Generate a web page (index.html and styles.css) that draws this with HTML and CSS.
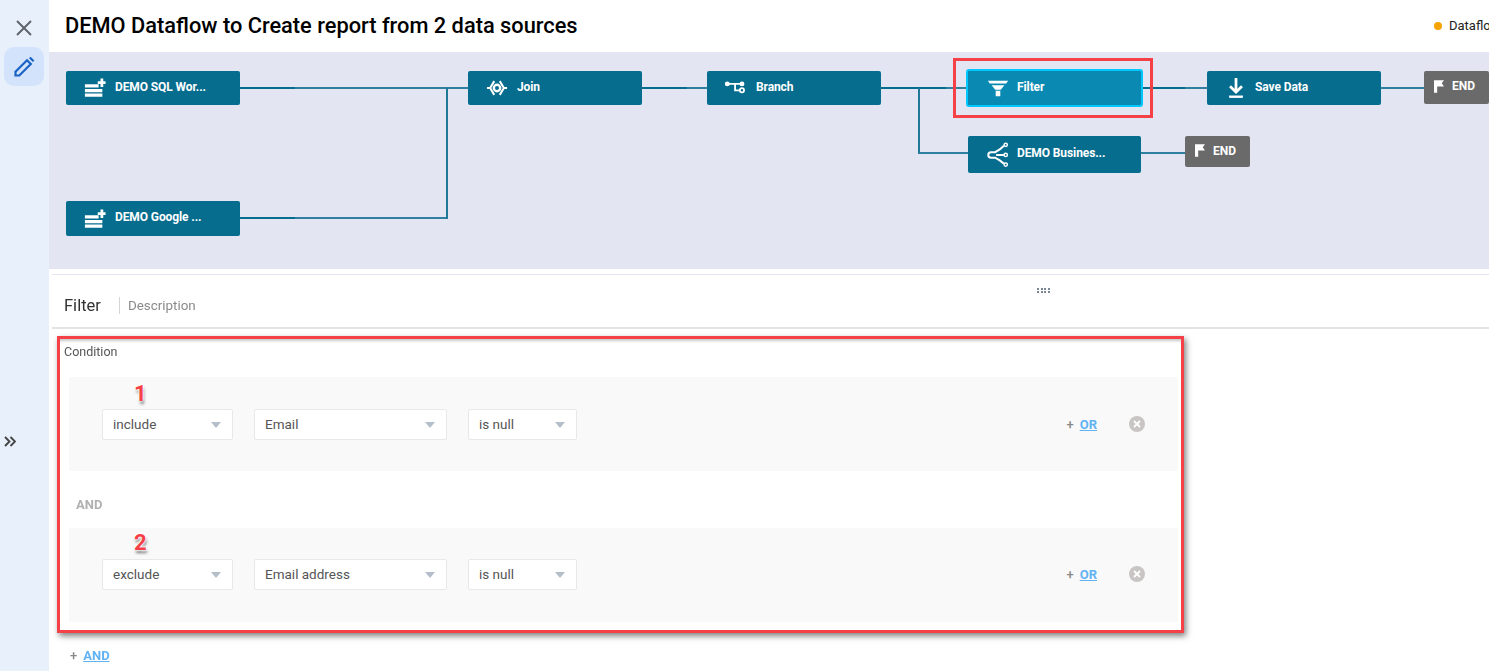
FILE: index.html
```html
<!DOCTYPE html>
<html lang="en">
<head>
<meta charset="utf-8">
<title>DEMO Dataflow</title>
<link rel="stylesheet" href="styles.css">
</head>
<body>
<aside class="rail">
  <button class="rail-btn close" aria-label="Close">
    <svg width="18" height="18" viewBox="0 0 18 18"><path d="M2 2l14 14M16 2L2 16" stroke="#5f6368" stroke-width="1.9" fill="none"/></svg>
  </button>
  <button class="rail-btn edit" aria-label="Edit">
    <svg width="24" height="24" viewBox="0 0 24 24"><path d="M3.500 20.500v-3.800L15 5.200 18.800 9 7.300 20.500z" fill="none" stroke="#1a62c4" stroke-width="2.200"/><path d="M17 3.300l1.600-1.600 3.800 3.800-1.600 1.600z" fill="#1a62c4"/></svg>
  </button>
  <button class="rail-expand" aria-label="Expand">
    <svg width="12" height="11" viewBox="0 0 12 11"><path d="M1 1l4.500 4.500L1 10M6.500 1L11 5.500 6.500 10" stroke="#444" stroke-width="1.900" fill="none"/></svg>
  </button>
</aside>
<main class="main">
  <header class="topbar">
    <h1 class="title">DEMO Dataflow to Create report from 2 data sources</h1>
    <div class="status"><span class="status-dot"></span><span class="status-text">Dataflow</span></div>
  </header>

  <section class="canvas">
    <span class="wire wire-h" style="left:191px;top:35px;width:228px"></span>
    <span class="wire wire-thick" style="left:191px;top:35px;width:55px"></span>
    <span class="wire wire-h" style="left:191px;top:165px;width:208px"></span>
    <span class="wire wire-thick" style="left:191px;top:165px;width:55px"></span>
    <span class="wire wire-v" style="left:397px;top:36px;height:131px"></span>
    <span class="wire wire-h" style="left:593px;top:35px;width:65px"></span>
    <span class="wire wire-thick" style="left:593px;top:35px;width:45px"></span>
    <span class="wire wire-h" style="left:832px;top:35px;width:90px"></span>
    <span class="wire wire-thick" style="left:832px;top:35px;width:65px"></span>
    <span class="wire wire-v" style="left:869px;top:36px;height:66px"></span>
    <span class="wire wire-h" style="left:870px;top:100px;width:50px"></span>
    <span class="wire wire-h" style="left:1094px;top:35px;width:70px"></span>
    <span class="wire wire-thick" style="left:1094px;top:35px;width:42px"></span>
    <span class="wire wire-h" style="left:1092px;top:100px;width:44px"></span>
    <span class="wire wire-h" style="left:1331px;top:35px;width:44px"></span>

    <div class="node" style="left:17px;top:19px">
      <svg class="node-icon" viewBox="0 0 24 24"><use href="#i-source"/></svg><span class="node-label">DEMO SQL Wor...</span>
    </div>
    <div class="node node-tall" style="left:17px;top:149px">
      <svg class="node-icon" viewBox="0 0 24 24"><use href="#i-source"/></svg><span class="node-label">DEMO Google ...</span>
    </div>
    <div class="node" style="left:419px;top:19px">
      <svg class="node-icon" viewBox="0 0 24 24"><circle cx="12" cy="12" r="3.500" fill="none" stroke="#fff" stroke-width="2.600"/><path d="M9 4.500L4.500 12 9 19.500M15 4.500l4.500 7.500-4.500 7.500" fill="none" stroke="#fff" stroke-width="2.200"/><path d="M1 12h4M19 12h4" stroke="#fff" stroke-width="2"/></svg><span class="node-label">Join</span>
    </div>
    <div class="node" style="left:658px;top:19px">
      <svg class="node-icon" viewBox="0 0 24 24"><circle cx="2.500" cy="7.500" r="2.700" fill="#fff"/><circle cx="18.500" cy="7.500" r="2.700" fill="#fff"/><circle cx="18.500" cy="14.500" r="2.300" fill="none" stroke="#fff" stroke-width="1.900"/><path d="M3 7.500h14M11 7.500v7h5.500" fill="none" stroke="#fff" stroke-width="2"/></svg><span class="node-label">Branch</span>
    </div>
    <div class="node node-active" style="left:917px;top:17px">
      <svg class="node-icon" viewBox="0 0 24 24"><path d="M1 4h22l-2 3H3zM5 9h14l-4 5H9z" fill="#fff"/><path d="M9.500 15h5v6h-5z" fill="#fff"/></svg><span class="node-label">Filter</span>
    </div>
    <div class="node node-save" style="left:1158px;top:19px">
      <svg class="node-icon" viewBox="0 0 24 24"><path d="M12 1v15.500M5.500 10l6.500 6.500 6.500-6.500" fill="none" stroke="#fff" stroke-width="3"/><path d="M4.500 21.500h15" stroke="#fff" stroke-width="2.600"/></svg><span class="node-label">Save Data</span>
    </div>
    <div class="node node-business" style="left:919px;top:84px">
      <svg class="node-icon" viewBox="0 0 24 24"><path d="M19.500 3l-4.500 4-5 3H5.500a3 3 0 0 0 0 6H10l5 3 4.500 3.500M11 13h8.500" fill="none" stroke="#fff" stroke-width="2.200"/><circle cx="21.500" cy="2" r="1.800" fill="none" stroke="#fff" stroke-width="1.600"/><circle cx="21.500" cy="13" r="1.800" fill="none" stroke="#fff" stroke-width="1.600"/><circle cx="21.500" cy="23.500" r="1.800" fill="none" stroke="#fff" stroke-width="1.600"/></svg><span class="node-label">DEMO Busines...</span>
    </div>
    <div class="end end-main" style="left:1375px;top:19px">
      <svg class="end-icon" viewBox="0 0 11 14"><path d="M0 0h11L8.500 3.500 11 7H3.500v7H0z" fill="#fff"/></svg><span class="end-label">END</span>
    </div>
    <div class="end" style="left:1136px;top:84px">
      <svg class="end-icon" viewBox="0 0 11 14"><path d="M0 0h11L8.500 3.500 11 7H3.500v7H0z" fill="#fff"/></svg><span class="end-label">END</span>
    </div>
    <div class="mark-filter"></div>
  </section>

  <section class="panel">
    <div class="handle"><i></i><i></i><i></i><i></i></div>
    <div class="panel-head">
      <span class="panel-title">Filter</span>
      <span class="panel-desc">Description</span>
    </div>
    <div class="cond-wrap">
      <div class="cond-box">
        <div class="cond-label">Condition</div>
        <div class="rule">
          <span class="callout callout-one">1</span>
          <div class="sel sel-a"><span>include</span><b class="caret"></b></div>
          <div class="sel sel-b"><span>Email</span><b class="caret"></b></div>
          <div class="sel sel-c"><span>is null</span><b class="caret"></b></div>
          <div class="rule-end">
            <span class="plus">+</span><a class="link" href="#">OR</a>
            <svg class="rm" viewBox="0 0 16 16"><circle cx="8" cy="8" r="8" fill="#c9c5c5"/><path d="M5 5l6 6M11 5l-6 6" stroke="#fff" stroke-width="1.800"/></svg>
          </div>
        </div>
        <div class="and-label">AND</div>
        <div class="rule rule-second">
          <span class="callout">2</span>
          <div class="sel sel-a"><span>exclude</span><b class="caret"></b></div>
          <div class="sel sel-b"><span>Email address</span><b class="caret"></b></div>
          <div class="sel sel-c"><span>is null</span><b class="caret"></b></div>
          <div class="rule-end">
            <span class="plus">+</span><a class="link" href="#">OR</a>
            <svg class="rm" viewBox="0 0 16 16"><circle cx="8" cy="8" r="8" fill="#c9c5c5"/><path d="M5 5l6 6M11 5l-6 6" stroke="#fff" stroke-width="1.800"/></svg>
          </div>
        </div>
      </div>
      <div class="add-and"><span class="plus">+</span><a class="link" href="#">AND</a></div>
    </div>
  </section>
</main>
<svg class="defs" width="0" height="0">
  <symbol id="i-source" viewBox="0 0 24 24">
    <path d="M1 8h15v3.500H1zM1 13h19v3.500H1zM1 18h19v3.500H1z" fill="#fff"/>
    <path d="M19.500 1.500v9.500M15 6.200h8.500" stroke="#fff" stroke-width="3"/>
  </symbol>
</svg>
</body>
</html>
```
FILE: styles.css
```css
* { box-sizing: border-box; }
html, body { height: 100%; }
body {
  margin: 0;
  display: flex;
  height: 671px;
  overflow: hidden;
  background: #fff;
  font-family: Roboto, "Liberation Sans", sans-serif;
  color: #333;
}
.defs { position: absolute; }

.rail {
  flex: 0 0 49px;
  background: #e8f0fb;
  display: flex;
  flex-direction: column;
  align-items: flex-start;
  padding-left: 4px;
}
.rail-btn {
  border: 0;
  background: none;
  padding: 0;
  display: flex;
  align-items: center;
  justify-content: center;
}
.close { width: 40px; height: 47px; padding-top: 9px; }
.edit { width: 40px; height: 39px; background: #d3e3fb; border-radius: 10px; }
.rail-expand {
  border: 0;
  background: none;
  padding: 0;
  margin-top: 350px;
  display: flex;
}

.main { flex: 1; min-width: 0; display: flex; flex-direction: column; }
.topbar {
  height: 52px;
  flex: none;
  display: flex;
  align-items: center;
  padding: 0 0 1px 16px;
}
.title {
  flex: 1;
  margin: 0;
  font-size: 21.800px;
  font-weight: 500;
  color: #000;
  white-space: nowrap;
}
.status {
  flex: 0 0 55px;
  display: flex;
  align-items: center;
  gap: 7px;
  overflow: hidden;
  white-space: nowrap;
  font-size: 13px;
  color: #222;
}
.status-dot {
  flex: none;
  width: 8px;
  height: 8px;
  border-radius: 50%;
  background: #f5a300;
}

.canvas {
  position: relative;
  height: 217px;
  flex: none;
  background: #e3e6f2;
}
.wire { position: absolute; display: block; background: #2f80a0; }
.wire-h { height: 2px; }
.wire-v { width: 2px; background: #1f7898; }
.wire-thick { height: 2px; background: #076d8e; }
.node {
  position: absolute;
  width: 174px;
  height: 34px;
  display: flex;
  align-items: center;
  padding-left: 18px;
  gap: 9px;
  background: #076d8e;
  border-radius: 2px;
  color: #fff;
  font-size: 12px;
  font-weight: 700;
  letter-spacing: -0.1px;
}
.node-label { white-space: nowrap; margin-bottom: 2px; }
.node-tall { height: 35px; }
.node-tall .node-label { margin-bottom: 3px; }
.node-save { gap: 8px; }
.node-business { width: 173px; height: 37px; }
.node-business .node-label { margin-bottom: 4px; }
.node-business .node-icon { margin-bottom: 2px; }
.node-active {
  width: 177px;
  height: 38px;
  padding-left: 19px;
  gap: 8px;
  background: #0a8ab2;
  border: 2px solid #00c8ff;
  border-radius: 3px;
}
.node-icon { flex: none; width: 22px; height: 22px; overflow: visible; }
.end {
  position: absolute;
  width: 65px;
  height: 31px;
  display: flex;
  align-items: center;
  gap: 8px;
  padding-left: 10px;
  background: #6a6a6a;
  border-radius: 2px;
  color: #fff;
  font-size: 12px;
  font-weight: 700;
}
.end-label { margin-bottom: 2px; }
.end-main { height: 33px; }
.end-main .end-label { margin-bottom: 3px; }
.end-icon { width: 10px; height: 13px; margin-bottom: 2px; }
.mark-filter {
  position: absolute;
  left: 904px;
  top: 6px;
  width: 200px;
  height: 60px;
  border: 3px solid #f64047;
}

.panel {
  position: relative;
  flex: 1;
  margin-left: 3px;
  padding-top: 5px;
  filter: blur(0.35px);
}
.panel::before {
  content: "";
  display: block;
  height: 1px;
  background: #e3e6f2;
}
.handle {
  position: absolute;
  left: 985px;
  top: 19px;
  width: 14px;
  display: grid;
  grid-template-columns: repeat(4, 2px);
  gap: 1.500px;
}
.handle i { display: block; height: 5px; background: repeating-linear-gradient(#7b8794 0 2px, transparent 2px 3px); }
.panel-head {
  height: 54px;
  display: flex;
  align-items: center;
  padding: 9px 0 0 12px;
  border-bottom: 2px solid #e3e3e3;
}
.panel-title {
  font-size: 16.500px;
  color: #333;
  padding-right: 18px;
  border-right: 1px solid #d5d5d5;
  line-height: 17px;
}
.panel-desc { font-size: 13.400px; color: #8a8a8a; padding-left: 8px; }
.cond-wrap { padding: 7px 0 0 0; }
.cond-box {
  position: relative;
  width: 1127px;
  margin-left: 5px;
  padding: 8px 6px 10px 7px;
  height: 297px;
  outline: 3px solid #f64047;
  outline-offset: -3px;
  box-shadow: 2px 3px 6px rgba(0, 0, 0, .5), inset 0 6px 3px -1px rgba(0, 0, 0, .22);
}
.cond-label { font-size: 12.500px; color: #555; height: 33px; }
.rule {
  position: relative;
  height: 94px;
  margin-left: 5px;
  padding-left: 33px;
  display: flex;
  align-items: center;
  gap: 21px;
  background: #f9f9f9;
}
.rule-second { padding-bottom: 2px; }
.sel {
  height: 31px;
  display: flex;
  align-items: center;
  justify-content: space-between;
  padding: 0 11px 0 10px;
  background: #fff;
  border: 1px solid #e8e8e8;
  border-radius: 2px;
  font-size: 13.500px;
  color: #555;
}
.sel-a { width: 131px; }
.sel-b { width: 193px; }
.sel-c { width: 109px; }
.caret {
  width: 0;
  height: 0;
  margin-top: 2px;
  border-left: 5px solid transparent;
  border-right: 5px solid transparent;
  border-top: 6px solid #b4bfcb;
}
.rule-end {
  margin-left: auto;
  display: flex;
  align-items: center;
  padding-right: 33px;
}
.plus { font-size: 13px; color: #888; font-weight: 500; margin-right: 6px; }
.link { color: #62b3f3; font-size: 13px; font-weight: 700; text-decoration: underline; }
.rm { width: 16px; height: 16px; margin-left: 32px; }
.callout {
  position: absolute;
  left: 65px;
  top: 2px;
  font-size: 22px;
  font-weight: 700;
  line-height: 26px;
  color: #f64047;
  text-shadow: 0 0 2px #fff, 0 0 3px #fff, 0 0 3px #fff, 1px 3px 3px rgba(0, 0, 0, .55);
}
.callout-one { top: 4px; }
.and-label {
  height: 57px;
  padding: 26px 0 0 12px;
  font-size: 13px;
  font-weight: 700;
  color: #b0b0b0;
}
.add-and { padding: 15px 0 0 18px; display: flex; align-items: center; }
```
